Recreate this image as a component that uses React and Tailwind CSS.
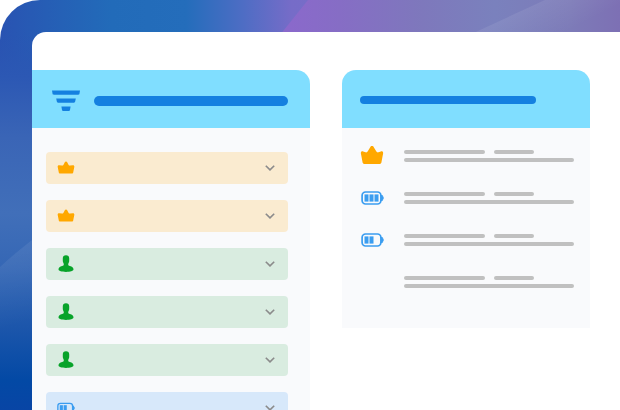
const filters = [
  { id: 1, type: "crown", label: "Crown filter 1" },
  { id: 2, type: "crown", label: "Crown filter 2" },
  { id: 3, type: "person", label: "Person filter 1" },
  { id: 4, type: "person", label: "Person filter 2" },
  { id: 5, type: "person", label: "Person filter 3" },
  { id: 6, type: "battery", label: "Battery filter" },
];

const details = [
  { id: 1, type: "crown" },
  { id: 2, type: "battery", bars: 3 },
  { id: 3, type: "battery", bars: 2 },
  { id: 4 },
];

const rowColors = {
  crown: "bg-[#faebd0]",
  person: "bg-[#d9ece0]",
  battery: "bg-[#d7e8fa]",
};

const CrownIcon = ({ className }) => (
  <svg viewBox="0 0 24 20" className={className} fill="#ffa800" aria-hidden="true">
    <path d="M10.5 .8a1.7 1.7 0 0 1 3 0l2.7 4.5c.5.9 1.3 1.3 2.3 1l2.3-.8c1.500-.5 2.600.4 2.300 1.900l-1.700 9.200c-.2.900-.7 1.300-1.600 1.300H4.200c-.9 0-1.400-.4-1.600-1.300L.9 7.400C.6 5.900 1.700 5 3.200 5.500l2.300.8c1 .3 1.800-.1 2.300-1z" />
  </svg>
);

const SmallCrownIcon = ({ className }) => (
  <svg viewBox="0 0 18 14" className={className} fill="#ffa800" aria-hidden="true">
    <path d="M7.800 1.300a1.300 1.300 0 0 1 2.400 0l1.300 2.400c.4.700.9.900 1.600.800l2.600-.3c1.200-.1 1.800.6 1.600 1.700l-1.100 5.600c-.2.700-.5 1-1.200 1H3c-.7 0-1-.3-1.200-1L.7 5.900C.5 4.800 1.100 4.100 2.300 4.200l2.600.3c.7.100 1.200-.1 1.600-.8z" />
  </svg>
);

const PersonIcon = ({ className }) => (
  <svg viewBox="0 0 16 18" className={className} fill="#08a32a" aria-hidden="true">
    <path d="M8 .2c2.100 0 3.200 1 3.200 3v2.600c0 1.800-1 2.500-1 3.700 0 .8.500 1.100 1.700 1.500 2.200.7 3.600 1.800 3.600 3.300 0 1.800-3.200 2.600-7.500 2.600S.5 16.100.5 14.300c0-1.500 1.400-2.600 3.600-3.300 1.200-.4 1.700-.7 1.700-1.500 0-1.200-1-1.900-1-3.700V3.200c0-2 1.100-3 3.200-3z" />
  </svg>
);

const BatteryIcon = ({ className, bars = 3 }) => (
  <svg viewBox="0 0 23 14" className={className} fill="#3b9df0" aria-hidden="true">
    <rect x="1.1" y="1" width="18.8" height="12" rx="3.4" fill="none" stroke="#3b9df0" strokeWidth="1.7" />
    <path d="M20 4h1.200c.4 0 .6.200.6.500v.8c.7.300.9.700.9 1.700s-.2 1.400-.9 1.700v.8c0 .300-.2.500-.6.500H20z" />
    {Array.from({ length: bars }, (_, i) => (
      <rect key={i} x={3.5 + i * 5} y="3.4" width="4" height="7.2" />
    ))}
  </svg>
);

const FilterIcon = ({ className }) => (
  <svg viewBox="0 0 28 22" className={className} fill="#1480e0" aria-hidden="true">
    <path d="M0 .5h28l-.5 3c-.1.800-.5 1.200-1.300 1.200H1.800C1 4.700.6 4.300.5 3.500z" />
    <path d="M4.200 8.400h19.600l-.6 3.200c-.1.700-.5 1.100-1.200 1.100H6c-.7 0-1.100-.4-1.200-1.100z" />
    <path d="M9.400 16.600h9.200l-.6 3.400c-.1.700-.5 1.100-1.200 1.100h-5.600c-.7 0-1.100-.4-1.200-1.100z" />
  </svg>
);

const ChevronIcon = ({ className }) => (
  <svg viewBox="0 0 10 6" className={className} fill="none" aria-hidden="true">
    <path d="M.8.700 5 4.900 9.200.700" stroke="#8b8b8b" strokeWidth="1.6" />
  </svg>
);

const RowIcon = ({ type }) => {
  if (type === "crown") return <SmallCrownIcon className="h-3.5 w-[18px]" />;
  if (type === "person") return <PersonIcon className="h-[18px] w-[18px]" />;
  return <BatteryIcon bars={2} className="h-3 w-[18px]" />;
};

const Wallpaper = () => (
  <svg
    viewBox="0 0 620 410"
    preserveAspectRatio="xMinYMin slice"
    className="absolute inset-0 -z-10 h-full w-full"
    aria-hidden="true"
  >
    <defs>
      <linearGradient id="sky" x1="0" y1="0" x2="620" y2="0" gradientUnits="userSpaceOnUse">
        <stop offset="0" stopColor="#2953b2" />
        <stop offset=".1" stopColor="#2561b6" />
        <stop offset=".18" stopColor="#226bb9" />
        <stop offset=".3" stopColor="#246dbb" />
        <stop offset=".39" stopColor="#4d6dc4" />
        <stop offset=".47" stopColor="#766cc8" />
        <stop offset="1" stopColor="#7d7cc0" />
      </linearGradient>
      <linearGradient id="beam" x1="290" y1="0" x2="620" y2="0" gradientUnits="userSpaceOnUse">
        <stop offset="0" stopColor="#8a69cb" />
        <stop offset=".15" stopColor="#866dc5" />
        <stop offset=".4" stopColor="#7e78bc" />
        <stop offset=".62" stopColor="#7a81bd" />
        <stop offset=".85" stopColor="#7d7bb8" />
        <stop offset="1" stopColor="#7d70b4" />
      </linearGradient>
      <linearGradient id="ray" x1="500" y1="20" x2="518" y2="56" gradientUnits="userSpaceOnUse">
        <stop offset="0" stopColor="#fff" stopOpacity=".08" />
        <stop offset="1" stopColor="#fff" stopOpacity="0" />
      </linearGradient>
      <linearGradient id="side" x1="0" y1="32" x2="0" y2="410" gradientUnits="userSpaceOnUse">
        <stop offset="0" stopColor="#2a55b2" stopOpacity="0" />
        <stop offset=".12" stopColor="#2c58b4" />
        <stop offset=".28" stopColor="#3a65b6" />
        <stop offset=".48" stopColor="#416fb9" />
        <stop offset=".62" stopColor="#3567b5" />
        <stop offset=".78" stopColor="#1c56ab" />
        <stop offset=".92" stopColor="#0349a5" />
        <stop offset="1" stopColor="#0845a5" />
      </linearGradient>
      <linearGradient id="glow" x1="16" y1="250" x2="36" y2="320" gradientUnits="userSpaceOnUse">
        <stop offset="0" stopColor="#fff" stopOpacity=".07" />
        <stop offset="1" stopColor="#fff" stopOpacity="0" />
      </linearGradient>
    </defs>
    <rect width="620" height="410" fill="url(#sky)" />
    <path d="M308 0H620V60H260z" fill="url(#beam)" />
    <path d="M545 0H620V60H415z" fill="url(#ray)" />
    <rect y="32" width="40" height="378" fill="url(#side)" />
    <path d="M0 267Q16 252 40 234V340H0z" fill="url(#glow)" />
  </svg>
);

const FilterPanel = () => (
  <section className="rounded-tr-[14px] bg-[#f9fafc]" aria-label="Filters">
    <header className="flex h-[58px] items-center gap-3.5 rounded-tr-[14px] bg-[#80deff] pt-1 pr-[22px] pl-5">
      <FilterIcon className="h-[22px] w-7 shrink-0" />
      <div className="h-2.5 flex-1 rounded-full bg-[#1480e0]" />
    </header>
    <ul className="flex flex-col gap-4 pt-6 pr-[22px] pb-6 pl-3.5">
      {filters.map((filter) => (
        <li key={filter.id}>
          <button
            type="button"
            aria-label={filter.label}
            className={`flex h-8 w-full items-center justify-between rounded pr-[13px] pl-[11px] ${rowColors[filter.type]}`}
          >
            <RowIcon type={filter.type} />
            <ChevronIcon className="h-1.5 w-2.5" />
          </button>
        </li>
      ))}
    </ul>
  </section>
);

const DetailPanel = () => (
  <section className="self-start rounded-t-[14px] bg-[#f9fafc]" aria-label="Details">
    <header className="flex h-[58px] items-center rounded-t-[14px] bg-[#80deff] pt-0.5 pr-[54px] pl-[18px]">
      <div className="h-2 flex-1 rounded-full bg-[#1480e0]" />
    </header>
    <ul className="flex flex-col gap-[30px] pt-[22px] pr-4 pb-10 pl-[18px]">
      {details.map((item) => (
        <li key={item.id} className="flex h-3 items-center gap-5">
          <div className="flex w-6 shrink-0 justify-center">
            {item.type === "crown" && <CrownIcon className="h-5 w-6" />}
            {item.type === "battery" && (
              <BatteryIcon bars={item.bars} className="h-3.5 w-[23px]" />
            )}
          </div>
          <div className="flex flex-1 flex-col gap-1">
            <div className="flex gap-[9px]">
              <div className="h-1 w-[81px] rounded-full bg-[#c0c0c0]" />
              <div className="h-1 w-10 rounded-full bg-[#c0c0c0]" />
            </div>
            <div className="h-1 rounded-full bg-[#c0c0c0]" />
          </div>
        </li>
      ))}
    </ul>
  </section>
);

const App = () => {
  return (
    <div className="h-screen overflow-hidden bg-white">
      <div className="relative isolate h-full overflow-hidden rounded-tl-[40px] pt-8 pl-8">
        <Wallpaper />
        <main className="grid h-full grid-cols-[278fr_248fr] gap-8 overflow-hidden rounded-tl-[14px] bg-white pt-[38px] pr-[30px]">
          <FilterPanel />
          <DetailPanel />
        </main>
      </div>
    </div>
  );
};

export default App;
